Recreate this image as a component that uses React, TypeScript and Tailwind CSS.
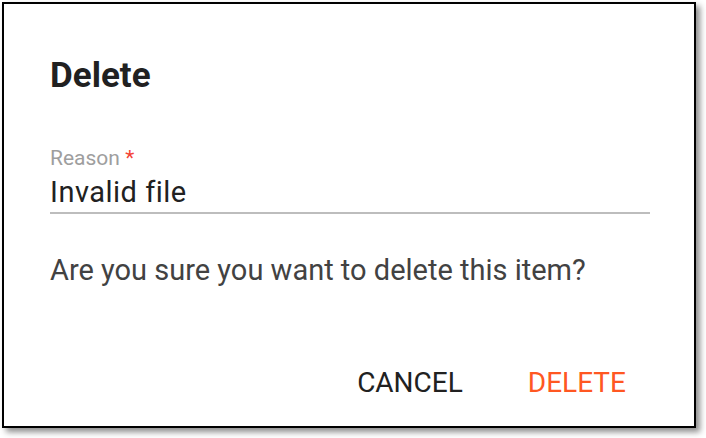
import React from "react";

export default function App() {
  return (
    <div className="w-[706px] h-[438px] bg-white relative" style={{ fontFamily: "Roboto, 'Liberation Sans', sans-serif" }}>
      <div className="absolute left-[2px] top-[2px] w-[694px] h-[426px] border-2 border-black bg-white shadow-[4px_4px_6px_rgba(0,0,0,0.45)] flex flex-col pl-[46px] pr-[44px]">
        <div className="pt-[52px] text-[35px] leading-[40px] font-bold text-[#212121]">Delete</div>
        <div className="mt-[50px] flex flex-col">
          <label className="text-[21px] leading-[24px] text-[#9e9e9e]">
            Reason <span className="text-[#f44336]">*</span>
          </label>
          <div className="mt-[4px] text-[29px] leading-[36px] tracking-[0.5px] text-[#212121] border-b-2 border-[#bdbdbd] pb-[2px]">Invalid file</div>
        </div>
        <p className="mt-[38px] text-[29px] leading-[36px] text-[#424242]">Are you sure you want to delete this item?</p>
        <div className="mt-auto mb-[26px] flex justify-end gap-[65px] pr-[24px]">
          <button className="text-[28px] leading-[34px] text-[#212121] uppercase">Cancel</button>
          <button className="text-[28px] leading-[34px] text-[#ff5722] uppercase">Delete</button>
        </div>
      </div>
    </div>
  );
}
